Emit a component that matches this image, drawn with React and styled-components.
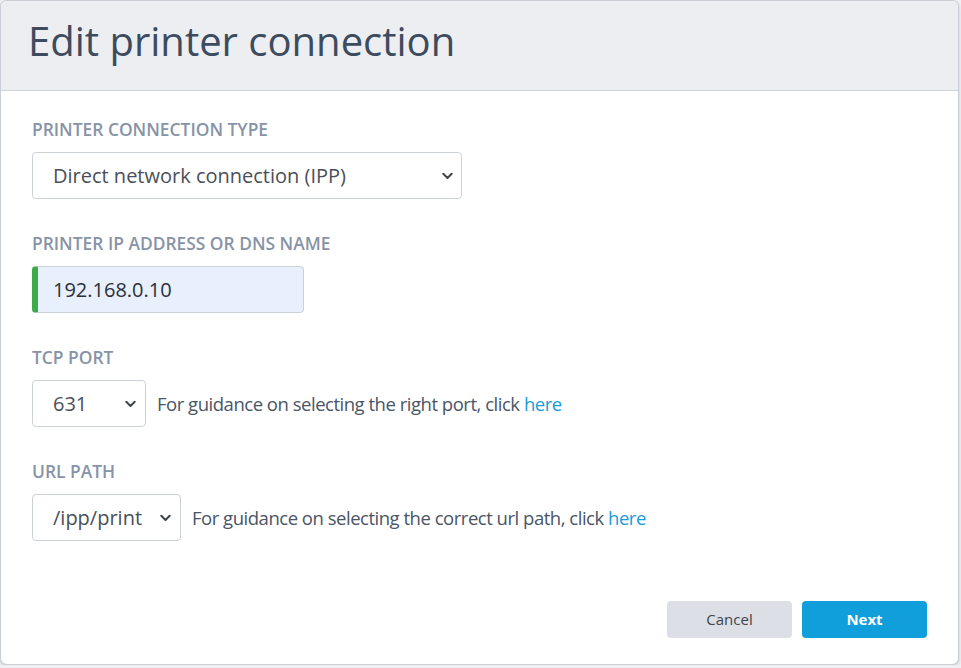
import React from "react";
import styled, { createGlobalStyle } from "styled-components";

const Global = createGlobalStyle`
  html, body { margin: 0; padding: 0; background: #eef0f3; }
  body { font-family: "Open Sans", "Liberation Sans", sans-serif; }
  * { box-sizing: border-box; }
`;

const Dialog = styled.div`
  width: 959px;
  height: 665px;
  background: #ffffff;
  border: 1px solid #c9cdd5;
  border-radius: 7px;
  box-shadow: 0 1px 3px rgba(60, 70, 90, 0.25);
  display: flex;
  flex-direction: column;
  overflow: hidden;
`;

const Header = styled.div`
  height: 90px;
  background: #eceef2;
  border-bottom: 1px solid #cfd3da;
  display: flex;
  align-items: center;
  padding-left: 27px;
  flex-shrink: 0;
`;

const Title = styled.h1`
  margin: 0;
  font-size: 40px;
  font-weight: 400;
  color: #3d4b5e;
  line-height: 1;
  padding-bottom: 9px;
`;

const Body = styled.div`
  flex: 1;
  padding: 27px 31px 0 31px;
  display: flex;
  flex-direction: column;
`;

const Field = styled.div`
  display: flex;
  flex-direction: column;
  margin-bottom: ${(p) => p.$mb ?? 33}px;
`;

const Label = styled.label`
  font-size: 17.4px;
  font-weight: 600;
  color: #8793a6;
  text-transform: uppercase;
  line-height: 22px;
  margin-bottom: 12px;
`;

const Row = styled.div`
  display: flex;
  align-items: center;
  gap: 11px;
`;

const SelectBox = styled.div`
  position: relative;
  width: ${(p) => p.$w}px;
  height: 47px;
  border: 1px solid #ccd1d8;
  border-radius: 4px;
  background: #fff;
  display: flex;
  align-items: center;
  padding-left: 20px;
  font-size: 20px;
  color: #4a4f57;
  flex-shrink: 0;
`;

const Chevron = styled.svg`
  position: absolute;
  right: ${(p) => p.$r}px;
  top: 50%;
  transform: translateY(-50%);
`;

const Input = styled.div`
  width: 272px;
  height: 47px;
  border: 1px solid #ccd1d8;
  border-left: 6px solid #3eaa49;
  border-radius: 4px;
  background: #e8f0fe;
  display: flex;
  align-items: center;
  padding-left: 15px;
  font-size: 20px;
  color: #2b2f36;
`;

const Hint = styled.span`
  font-size: 18.5px;
  letter-spacing: -0.48px;
  color: #4a5566;
`;

const Link = styled.a`
  color: #1a9cd8;
  text-decoration: none;
  cursor: pointer;
`;

const Footer = styled.div`
  display: flex;
  justify-content: flex-end;
  gap: 10px;
  padding: 0 31px 26px 0;
`;

const Button = styled.button`
  width: 125px;
  height: 37px;
  border: none;
  border-radius: 4px;
  font-family: "Open Sans", "Liberation Sans", sans-serif;
  font-size: 15px;
  line-height: 1;
  padding-bottom: 2px;
  cursor: pointer;
  background: ${(p) => (p.$primary ? "#109fda" : "#dcdfe5")};
  color: ${(p) => (p.$primary ? "#ffffff" : "#3f444b")};
  font-weight: ${(p) => (p.$primary ? 700 : 400)};
`;

const Caret = ({ r }) => (
  <Chevron $r={r} width="11" height="7" viewBox="0 0 11 7">
    <path d="M1.3 1.3 L5.5 5.5 L9.7 1.3" fill="none" stroke="#3f444b" strokeWidth="2" strokeLinecap="round" strokeLinejoin="round" />
  </Chevron>
);

export default function App() {
  return (
    <>
      <Global />
      <Dialog>
        <Header>
          <Title>Edit printer connection</Title>
        </Header>
        <Body>
          <Field>
            <Label>Printer connection type</Label>
            <SelectBox $w={430}>
              Direct network connection (IPP)
              <Caret r={8} />
            </SelectBox>
          </Field>
          <Field>
            <Label>Printer IP address or DNS name</Label>
            <Input>192.168.0.10</Input>
          </Field>
          <Field>
            <Label>TCP port</Label>
            <Row>
              <SelectBox $w={114}>
                631
                <Caret r={9} />
              </SelectBox>
              <Hint>
                For guidance on selecting the right port, click <Link>here</Link>
              </Hint>
            </Row>
          </Field>
          <Field $mb={0}>
            <Label>URL path</Label>
            <Row>
              <SelectBox $w={149}>
                /ipp/print
                <Caret r={9} />
              </SelectBox>
              <Hint>
                For guidance on selecting the correct url path, click <Link>here</Link>
              </Hint>
            </Row>
          </Field>
        </Body>
        <Footer>
          <Button>Cancel</Button>
          <Button $primary>Next</Button>
        </Footer>
      </Dialog>
    </>
  );
}
